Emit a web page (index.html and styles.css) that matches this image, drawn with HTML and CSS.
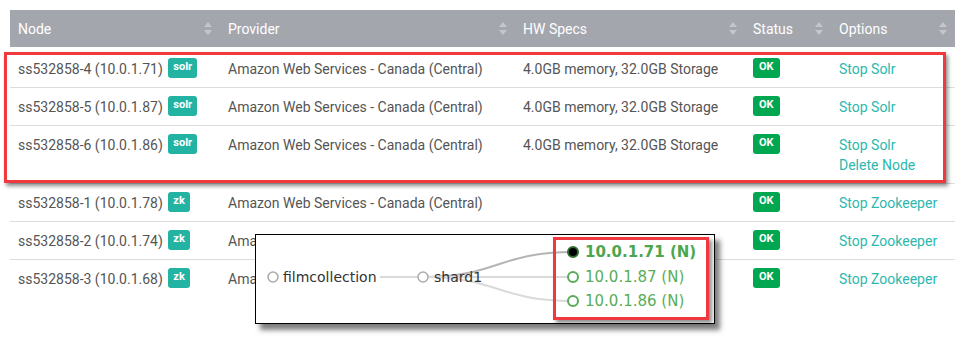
FILE: index.html
```html
<!DOCTYPE html>
<html lang="en">
<head>
  <meta charset="UTF-8">
  <title>Cluster Nodes</title>
  <link rel="stylesheet" href="styles.css">
</head>
<body>
  <div class="page">
    <table class="nodes">
      <colgroup>
        <col class="c-node"><col class="c-provider"><col class="c-specs"><col class="c-status"><col class="c-options">
      </colgroup>
      <thead>
        <tr>
          <th><span class="th-inner">Node <svg class="sort" width="8" height="13" viewBox="0 0 8 13"><path d="M4 0L8 5H0z M4 13L0 8H8z"/></svg></span></th>
          <th><span class="th-inner">Provider <svg class="sort" width="8" height="13" viewBox="0 0 8 13"><path d="M4 0L8 5H0z M4 13L0 8H8z"/></svg></span></th>
          <th><span class="th-inner">HW Specs <svg class="sort" width="8" height="13" viewBox="0 0 8 13"><path d="M4 0L8 5H0z M4 13L0 8H8z"/></svg></span></th>
          <th><span class="th-inner">Status <svg class="sort" width="8" height="13" viewBox="0 0 8 13"><path d="M4 0L8 5H0z M4 13L0 8H8z"/></svg></span></th>
          <th><span class="th-inner">Options <svg class="sort" width="8" height="13" viewBox="0 0 8 13"><path d="M4 0L8 5H0z M4 13L0 8H8z"/></svg></span></th>
        </tr>
      </thead>
      <tbody>
        <tr>
          <td>ss532858-4 (10.0.1.71) <span class="badge">solr</span></td>
          <td>Amazon Web Services - Canada (Central)</td>
          <td>4.0GB memory, 32.0GB Storage</td>
          <td><span class="badge ok">OK</span></td>
          <td><a href="#">Stop Solr</a></td>
        </tr>
        <tr>
          <td>ss532858-5 (10.0.1.87) <span class="badge">solr</span></td>
          <td>Amazon Web Services - Canada (Central)</td>
          <td>4.0GB memory, 32.0GB Storage</td>
          <td><span class="badge ok">OK</span></td>
          <td><a href="#">Stop Solr</a></td>
        </tr>
        <tr>
          <td>ss532858-6 (10.0.1.86) <span class="badge">solr</span></td>
          <td>Amazon Web Services - Canada (Central)</td>
          <td>4.0GB memory, 32.0GB Storage</td>
          <td><span class="badge ok">OK</span></td>
          <td><a href="#">Stop Solr</a><br><a href="#">Delete Node</a></td>
        </tr>
        <tr>
          <td>ss532858-1 (10.0.1.78) <span class="badge">zk</span></td>
          <td>Amazon Web Services - Canada (Central)</td>
          <td></td>
          <td><span class="badge ok">OK</span></td>
          <td><a href="#">Stop Zookeeper</a></td>
        </tr>
        <tr>
          <td>ss532858-2 (10.0.1.74) <span class="badge">zk</span></td>
          <td>Amazon Web Services - Canada (Central)</td>
          <td></td>
          <td><span class="badge ok">OK</span></td>
          <td><a href="#">Stop Zookeeper</a></td>
        </tr>
        <tr>
          <td>ss532858-3 (10.0.1.68) <span class="badge">zk</span></td>
          <td>Amazon Web Services - Canada (Central)</td>
          <td></td>
          <td><span class="badge ok">OK</span></td>
          <td><a href="#">Stop Zookeeper</a></td>
        </tr>
      </tbody>
    </table>

    <!-- highlight over the solr rows -->
    <div class="highlight rows-mark"></div>

    <!-- collection graph callout, sits over the last rows -->
    <div class="graph">
      <svg class="tree" width="458" height="88" viewBox="0 0 458 88">
        <path class="link" d="M124 42H162"/>
        <path class="link dark" d="M167 42C242 42 242 17 317 17"/>
        <path class="link" d="M167 42H317"/>
        <path class="link" d="M167 42C242 42 242 66 317 66"/>
        <circle class="node" cx="17" cy="42" r="5"/>
        <text class="label" x="27" y="47">filmcollection</text>
        <circle class="node" cx="167" cy="42" r="5"/>
        <text class="label" x="178" y="47">shard1</text>
        <circle class="leaf leader" cx="317" cy="17" r="5"/>
        <text class="replica strong" x="329" y="22">10.0.1.71 (N)</text>
        <circle class="leaf" cx="317" cy="42" r="5"/>
        <text class="replica" x="329" y="47">10.0.1.87 (N)</text>
        <circle class="leaf" cx="317" cy="66" r="5"/>
        <text class="replica" x="329" y="71">10.0.1.86 (N)</text>
      </svg>
      <div class="highlight replicas-mark"></div>
    </div>
  </div>
</body>
</html>
```

FILE: styles.css
```css
* {
  box-sizing: border-box;
}

body {
  margin: 0;
  background: #fff;
  font-family: Roboto, "Liberation Sans", sans-serif;
  font-size: 14px;
  color: #555;
}

.page {
  position: relative;
  min-height: 339px;
  padding: 10px;
}

.nodes {
  width: 945px;
  border-collapse: collapse;
  table-layout: fixed;
}

.c-node { width: 210px; }
.c-provider { width: 295px; }
.c-specs { width: 230px; }
.c-status { width: 86px; }
.c-options { width: 124px; }

.nodes th {
  height: 37px;
  padding: 0 8px;
  background: #a4a6ae;
  color: #fff;
  font-weight: normal;
  text-align: left;
  border-bottom: 3px solid #fff;
}

.th-inner {
  display: flex;
  align-items: center;
  justify-content: space-between;
  height: 37px;
}

.sort {
  fill: #c4c6cc;
}

.nodes td {
  padding: 9px 8px 8px;
  line-height: 20px;
  vertical-align: top;
  border-top: 1px solid #dcdcdc;
  white-space: nowrap;
}

.nodes tbody tr:first-child td {
  border-top: none;
}

.badge {
  display: inline-block;
  vertical-align: top;
  margin: -1px 0 0 2px;
  height: 20px;
  padding: 0 5px;
  border-radius: 3px;
  background: #22b3a3;
  color: #fff;
  font-size: 11px;
  font-weight: bold;
  line-height: 17px;
}

.badge.ok {
  margin-left: 0;
  padding: 0 6px;
  background: #00a650;
}

.nodes a {
  color: #2cb8ae;
  text-decoration: none;
}

.highlight {
  position: absolute;
  border: 3px solid #f0383f;
  box-shadow: 2px 3px 4px rgba(0, 0, 0, .45);
}

.rows-mark {
  left: 4px;
  top: 52px;
  width: 942px;
  height: 131px;
}

.graph {
  position: absolute;
  left: 255px;
  top: 234px;
  width: 460px;
  height: 90px;
  background: #fff;
  border: 1px solid #000;
  box-shadow: 5px 6px 5px rgba(0, 0, 0, .5);
}

.tree {
  display: block;
  font-family: "DejaVu Sans", Verdana, sans-serif;
  font-size: 14px;
}

.link {
  fill: none;
  stroke: #dadada;
  stroke-width: 2;
}

.link.dark {
  stroke: #b5b5b5;
}

.node {
  fill: #fff;
  stroke: #aaa;
  stroke-width: 1.5;
}

.label {
  fill: #333;
}

.leaf {
  fill: #fff;
  stroke: #57ad57;
  stroke-width: 2;
}

.leaf.leader {
  fill: #000;
  stroke: #2e6e2e;
}

.replica {
  font-size: 15px;
  fill: #58ad58;
}

.replica.strong {
  font-weight: bold;
  fill: #4ca64c;
}

.replicas-mark {
  left: 297px;
  top: 2px;
  width: 156px;
  height: 83px;
  box-shadow: 3px 3px 4px rgba(0, 0, 0, .45);
}
```
